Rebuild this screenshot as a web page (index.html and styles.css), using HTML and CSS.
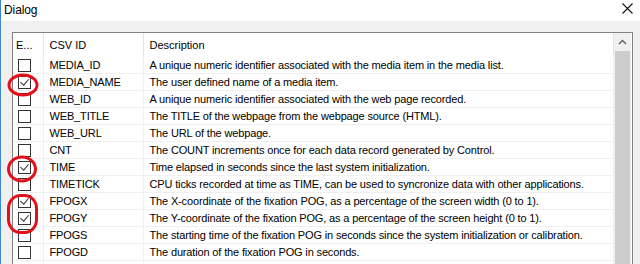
FILE: index.html
```html
<!DOCTYPE html>
<html><head><title>Dialog</title><link rel="stylesheet" href="styles.css"></head>
<body>
<div class='window'>
  <div class='titlebar'><span class='caption'>Dialog</span><svg class='close' width='11' height='11' viewBox='0 0 11 11'><path d='M0.5,0.5 L10.5,10.5 M10.5,0.5 L0.5,10.5' stroke='#111' stroke-width='1.1' fill='none'/></svg></div>
  <div class='client'>
    <div class='listbox'>
      <table class='grid'>
        <colgroup><col class='c-enable'><col class='c-id'><col class='c-desc'></colgroup>
        <tr class='head'><th>E...</th><th>CSV ID</th><th>Description</th></tr>
        <tr><td><span class='check'></span></td><td>MEDIA_ID</td><td>A unique numeric identifier associated with the media item in the media list.</td></tr>
        <tr><td><span class='check on'></span></td><td>MEDIA_NAME</td><td>The user defined name of a media item.</td></tr>
        <tr><td><span class='check'></span></td><td>WEB_ID</td><td>A unique numeric identifier associated with the web page recorded.</td></tr>
        <tr><td><span class='check'></span></td><td>WEB_TITLE</td><td>The TITLE of the webpage from the webpage source (HTML).</td></tr>
        <tr><td><span class='check'></span></td><td>WEB_URL</td><td>The URL of the webpage.</td></tr>
        <tr><td><span class='check'></span></td><td>CNT</td><td>The COUNT increments once for each data record generated by Control.</td></tr>
        <tr><td><span class='check on'></span></td><td>TIME</td><td>Time elapsed in seconds since the last system initialization.</td></tr>
        <tr><td><span class='check'></span></td><td>TIMETICK</td><td>CPU ticks recorded at time as TIME, can be used to syncronize data with other applications.</td></tr>
        <tr><td><span class='check on'></span></td><td>FPOGX</td><td>The X-coordinate of the fixation POG, as a percentage of the screen width (0 to 1).</td></tr>
        <tr><td><span class='check on'></span></td><td>FPOGY</td><td>The Y-coordinate of the fixation POG, as a percentage of the screen height (0 to 1).</td></tr>
        <tr><td><span class='check'></span></td><td>FPOGS</td><td>The starting time of the fixation POG in seconds since the system initialization or calibration.</td></tr>
        <tr><td><span class='check'></span></td><td>FPOGD</td><td>The duration of the fixation POG in seconds.</td></tr>
        <tr><td></td><td></td><td></td></tr>
      </table>
      <div class='scrollbar'>
        <div class='arrow'><svg width='9' height='6' viewBox='0 0 9 6'><polyline points='1,5 4.5,1.5 8,5' fill='none' stroke='#606060' stroke-width='1.4'/></svg></div>
        <div class='thumb'></div>
      </div>
    </div>
  </div>
</div>
<svg class='marks' width='640' height='264' viewBox='0 0 640 264'>
  <ellipse cx='23' cy='85' rx='14' ry='10' />
  <ellipse cx='22' cy='169' rx='13.5' ry='12' />
  <rect x='8.5' y='195.5' width='28' height='37' rx='12' ry='13' />
</svg>
</body></html>
```
FILE: styles.css
```css
body { margin: 0; width: 640px; height: 264px; overflow: hidden; position: relative;
       font-family: 'Liberation Sans', Arial, sans-serif; font-size: 11px; color: #000; }
.window { border-left: 1px solid #3c86d6; background-color: #f0f0f0; height: 264px; }
.titlebar { height: 21px; background-color: #ffffff; display: flex; align-items: center; justify-content: space-between; }
.caption { padding-left: 3px; font-size: 12px; letter-spacing: -0.1px; margin-top: -2px; }
svg.close { margin-right: 7px; margin-top: -4px; }
.client { padding: 11px 7px 0 11px; }
.listbox { border: 1px solid #828282; background-color: #ffffff; display: flex; height: 240px; overflow: hidden; padding-right: 2px; }
table.grid { border-collapse: collapse; table-layout: fixed; width: 600px; flex: none; }
col.c-enable { width: 30px; }
col.c-id { width: 100px; }
col.c-desc { width: 470px; }
table.grid th { height: 24px; font-weight: normal; text-align: left; padding: 0 0 0 6px;
                border-right: 1px solid #e5e5e5; white-space: nowrap; overflow: hidden; }
table.grid th:first-child { padding-left: 3px; }
table.grid td { height: 16px; padding: 0 0 0 6px; border-right: 1px solid #f0f0f0; border-bottom: 1px solid #f0f0f0;
                white-space: nowrap; overflow: hidden; letter-spacing: -0.15px; }
table.grid td:first-child { padding-left: 5px; }
span.check { display: block; width: 11px; height: 11px; border: 1px solid #333; background: #fff; position: relative; }
span.check.on::after { content: ''; position: absolute; left: 3px; top: 0px; width: 4px; height: 7px;
                       border: solid #333; border-width: 0 1px 1px 0; transform: rotate(40deg); }
.scrollbar { width: 17px; background-color: #f0f0f0; flex: none; display: flex; flex-direction: column; }
.arrow { height: 17px; display: flex; align-items: center; justify-content: center; }
.thumb { margin: 1px 1px 0 1px; flex: 1; background-color: #cdcdcd; }
svg.marks { position: absolute; left: 0; top: 0; pointer-events: none; }
svg.marks * { fill: none; stroke: #e3101b; stroke-width: 3; }
```
